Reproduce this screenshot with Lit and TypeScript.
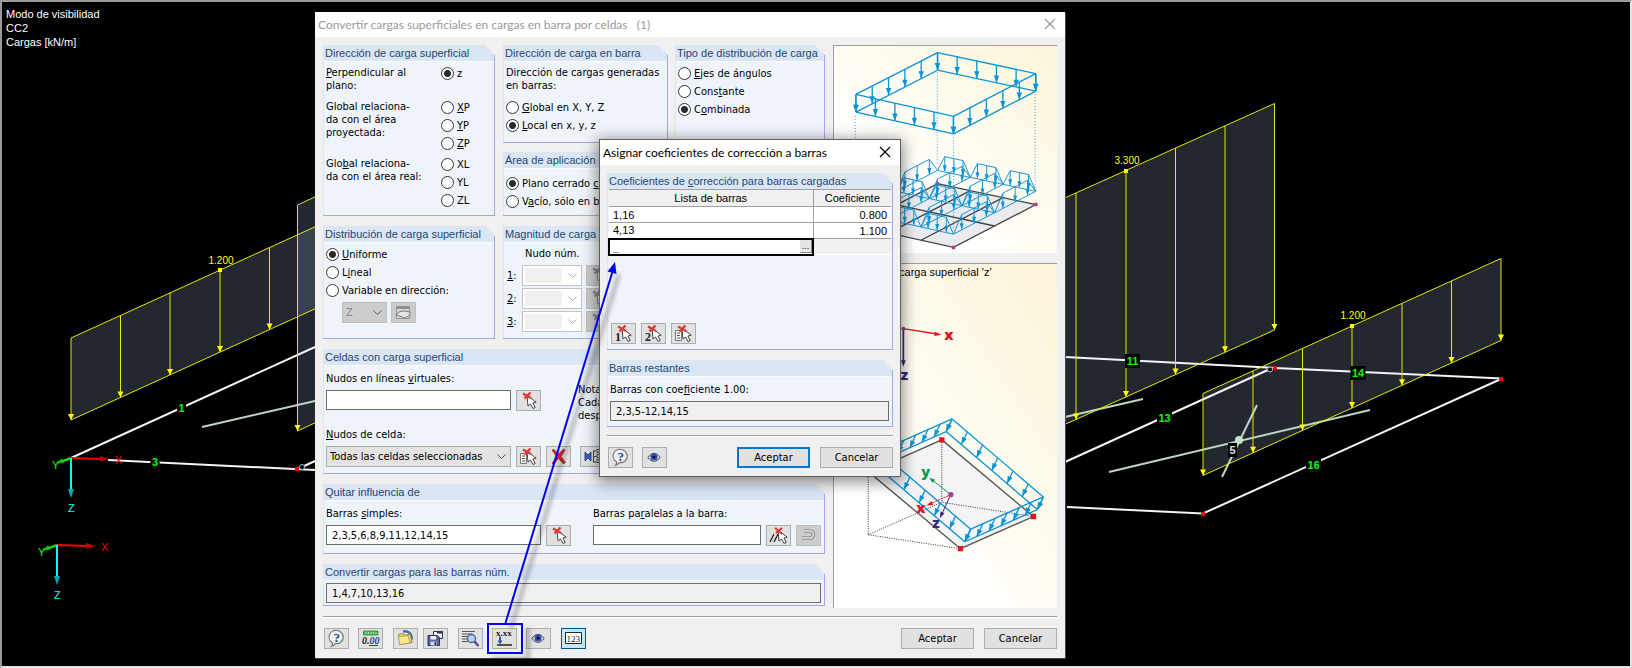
import { LitElement, html, css, svg } from "lit";
import { customElement, property } from "lit/decorators.js";

type Pt = [number, number];

/** Turns "&Lineal" into an underlined access key followed by the rest. */
const key = (s: string) => {
  const i = s.indexOf("&");
  return i < 0 ? s : html`${s.slice(0, i)}<u>${s[i + 1]}</u>${s.slice(i + 2)}`;
};

const lerp = (a: Pt, b: Pt, t: number): Pt => [a[0] + (b[0] - a[0]) * t, a[1] + (b[1] - a[1]) * t];
const pts = (...p: Pt[]) => p.map((q) => q.join(",")).join(" ");

/** Titled panel with a cut upper right corner. */
@customElement("load-group")
export class LoadGroup extends LitElement {
  @property() heading = "";
  static styles = css`
    :host {
      display: flex;
      flex-direction: column;
      position: relative;
      min-width: 0;
      box-sizing: border-box;
      border-bottom: 1px solid #a5a5ee;
    }
    :host::after {
      content: "";
      position: absolute;
      top: 10px;
      right: 0;
      bottom: 0;
      width: 1px;
      background: #a5a5ee;
    }
    h2 {
      margin: 0;
      height: 16px;
      padding-left: 2px;
      font: 11px/16px "Liberation Sans", Arial, sans-serif;
      white-space: nowrap;
      overflow: hidden;
      color: #1d4673;
      background: #dbe6f5;
      clip-path: polygon(0 0, calc(100% - 10px) 0, 100% 10px, 100% 100%, 0 100%);
    }
    .body {
      flex: 1;
      background: #eff4fa;
      border-left: 1px solid #dbe6f5;
      box-shadow: inset 0 1px #fafcfe;
      overflow: hidden;
    }
  `;
  render() {
    return html`<h2>${key(this.heading)}</h2>
      <div class="body"><slot></slot></div>`;
  }
}

const pointer = svg`<path d="M0 0 L1 11 L3.5 9 L6 13.5 L8.2 12.5 L6 8 L9.2 7.2 Z" fill="#fff" stroke="#444" stroke-width="1"/>`;
const redCross = svg`<path d="M-1 0.5 L7 5 M6.500 -0.5 L0.500 5.500" stroke="#dc3a34" stroke-width="2.400" fill="none"/>`;
const sheet = svg`<path d="M3.500 6.500h6v10h-6z" fill="#f6f6f6" stroke="#777"/><path d="M5 9h3M5 11.500h3M5 14h3" stroke="#555"/>`;
const pick = svg`<g transform="translate(10 4)">${pointer}</g><g transform="translate(7 2)">${redCross}</g>`;

const icons: Record<string, unknown> = {
  pick,
  pickList: svg`${sheet}${pick}`,
  pick1: svg`<text x="3" y="17" font-family="Liberation Serif" font-weight="bold" font-size="12" fill="#222">1</text>${pick}`,
  pick2: svg`<text x="3" y="17" font-family="Liberation Serif" font-weight="bold" font-size="12" fill="#222">2</text>${pick}`,
  pickParallel: svg`<path d="M3 16l4-8M7 16l4-8" stroke="#222" stroke-width="1.3"/><g transform="translate(11 4)">${pointer}</g><path d="M8 2l7 6M15 2l-6 5" stroke="#d8342c" stroke-width="1.800"/>`,
  remove: svg`<path d="M5 3l2-.5 4.500 4.500L16.500 2l1.500 1-4 6.500 4.500 6-2 1.500-5-5.500L7 17l-2-.5 4.500-7z" fill="#d02a24" stroke="#8c1210" stroke-width=".6"/>`,
  columns: svg`<path d="M4 5l3 3 3-3v9l-3-3-3 3z" fill="#3a5fbe" stroke="#1d347c" stroke-width=".8"/><path d="M12.500 3.500v12M12.500 4h3M12.500 9.500h3M12.500 15h3M16 2.500h6v3h-6zM16 7.500h6v3h-6zM16 12.500h6v3h-6z" fill="#eee" stroke="#444"/>`,
  help: svg`<path d="M11.500 1.500a6.600 6.600 0 1 1-1 13.100 10 10 0 0 1-4 2.700c1-1.200 1.300-2.200 1.100-3.400a6.600 6.600 0 0 1 3.900-12.400z" fill="#eef0f6" stroke="#777" stroke-width="1.200"/><text x="8.500" y="13" font-family="Liberation Serif" font-weight="bold" font-size="13" fill="#26468f">?</text>`,
  ruler: svg`<path d="M4.500 2h14.500v4H4.500z" fill="#4dbb52" stroke="#2a8a38" stroke-width=".8"/><path d="M7 3v2M9.500 3v2M12 3v2M14.500 3v2M17 3v2" stroke="#b6ecb4" stroke-width=".8"/><text x="3" y="15" font-family="Liberation Serif" font-style="italic" font-weight="bold" font-size="10" fill="#222">0.<tspan fill="#2b3f94">00</tspan></text><path d="M10 16.500h9" stroke="#2b3f94"/>`,
  open: svg`<path d="M9 2.500c5-1 8.500 1.500 9 8" fill="none" stroke="#456aa8" stroke-width="2.400"/><path d="M4.500 5.500l4-1 2 1.500 6-.5 1.500 8-12 2z" fill="#eed070" stroke="#96803a" stroke-width=".9"/><path d="M4.500 8l9.500-1.500 2 7.500-10.500 1.500z" fill="#fae794" stroke="#96803a" stroke-width=".6"/>`,
  save: svg`<path d="M9.500 2.500h9v7h-9z" fill="#f4f4f8" stroke="#334"/><path d="M13 2.500h5.500v2H13z" fill="#334"/><path d="M4 6.500h9.500l2 2v8H4z" fill="#55659f" stroke="#26305f"/><path d="M6.500 7h5.500v3.500H6.500z" fill="#f5f5fa"/><path d="M6.500 12.500h6v4h-6z" fill="#d5d9ea"/><path d="M10.500 13h1.500v3h-1.500z" fill="#26305f"/>`,
  preview: svg`<path d="M3 2.500h13M3 5h10M3 7.500h7M3 10h6M3 12.500h6" stroke="#555"/><circle cx="12.500" cy="9.500" r="4" fill="#bcd2f3" stroke="#4a66a4" stroke-width="1.400"/><path d="M15.500 12.500l4 4.500" stroke="#3d4fa0" stroke-width="2.400"/>`,
  factor: svg`<text x="3" y="6.500" font-family="Liberation Serif" font-weight="bold" font-size="9" fill="#222">x.xx</text><path d="M7 7.500v5" stroke="#2c58b0" stroke-width="2"/><path d="M4.500 11.500h5L7 15.500z" fill="#2c58b0"/><path d="M4 16h15" stroke="#222" stroke-width="1.500"/>`,
  eye: svg`<path d="M5 9.500c3-5.500 9-5.500 12 0-3 5-9 5-12 0z" fill="#dfe3f2" stroke="#444"/><circle cx="11" cy="9" r="3.600" fill="#3450b4"/><circle cx="11" cy="9" r="1.500" fill="#0a0f35"/>`,
  numbers: svg`<path d="M3.500 3.500h16v11h-16z" fill="#fff" stroke="#222"/><text x="4.500" y="12.500" font-family="Liberation Serif" font-size="9" fill="#111">123</text>`,
  loop: svg`<path d="M5 12h8a3.500 3.500 0 0 0 0-7H7" fill="none" stroke="#666" stroke-width="3.500"/><path d="M5 12h8a3.500 3.500 0 0 0 0-7H7" fill="none" stroke="#eee" stroke-width="1.400"/>`,
  hand: svg`<path d="M4.500 3.500h13v12h-13z" fill="#ddd" stroke="#777"/><path d="M4.500 3.500h13v2.500h-13z" fill="#666"/><path d="M4 11.500l4-3 4-.5 6 1v3l-5 3-3-1z" fill="#f4f4ee" stroke="#444"/>`,
};

/** Vertical load strip: top edge from a to b, arrows hanging down by h. */
interface Strip {
  a: Pt;
  b: Pt;
  h: number;
  xs: number[];
}
const strips: Strip[] = [
  { a: [71, 338], b: [319, 225], h: 82, xs: [71, 120.5, 170, 220, 269.5] },
  { a: [297.5, 205], b: [319, 195], h: 226, xs: [297.5] },
  { a: [1027, 215], b: [1274.5, 103.5], h: 226.5, xs: [1076, 1126, 1175.5, 1225, 1274.5] },
  { a: [1203, 393.5], b: [1501, 258.5], h: 82, xs: [1203, 1253, 1302.5, 1352, 1402, 1451.5, 1501] },
];
const stripFill = ({ a, b, h }: Strip) =>
  svg`<polygon points=${pts(a, b, [b[0], b[1] + h], [a[0], a[1] + h])} class="fill"/>`;
const stripLoad = ({ a, b, h, xs }: Strip) => {
  const at = (x: number) => a[1] + ((b[1] - a[1]) * (x - a[0])) / (b[0] - a[0]);
  return svg`
    <path class="load" d="M${a.join(" ")}L${b.join(" ")}M${a[0]} ${a[1] + h}L${b[0]} ${b[1] + h}"/>
    ${xs.map((x) => svg`<path class="load" d="M${x} ${at(x)}V${at(x) + h}"/><path class="head" d="M${x - 3} ${at(x) + h - 6}h6l-3 6z"/>`)}`;
};

const triad = (x: number, y: number) => svg`
  <path d="M${x} ${y}l-8 3" stroke="#0f0" stroke-width="2"/><path d="M${x - 14} ${y + 5}l5-4 2 3z" fill="#0c0" stroke="#0c0"/>
  <path d="M${x} ${y}l30 1" stroke="#f00" stroke-width="2"/><path d="M${x + 29} ${y - 2}l10 3-10 2.500z" fill="#c00000"/>
  <path d="M${x} ${y}v32" stroke="#0ff" stroke-width="2"/><path d="M${x - 3} ${y + 31}h6l-3 9z" fill="#00aab4"/>
  <text x=${x - 19} y=${y + 11} fill="#0f0">Y</text>
  <text x=${x + 44} y=${y + 6} fill="#f00">X</text>
  <text x=${x - 3} y=${y + 54} fill="#0ff">Z</text>`;

const tag = (x: number, y: number, t: string, color = "#0f0") => {
  const w = t.length * 6 + 3;
  return svg`<rect x=${x - w / 2} y=${y - 7} width=${w} height="14" fill="#000"/>
    <text class="num" x=${x} y=${y + 4} fill=${color}>${t}</text>`;
};

const scene = svg`
  ${strips.map(stripFill)}
  <path class="bar" d="M71 458L315 347M108 460L315 470M302 467L315 461"/>
  <path class="bar" d="M1065 357L1275 368L1502 378.500M1065 462L1270 369M1067 507L1203 513.500L1501 379"/>
  <path class="virt" d="M202 427L315 401M1065 417L1143 399M1109 472L1370 410M1222 477L1257 405"/>
  <circle cx="1239" cy="440" r="4" fill="#c4dfcb"/>
  ${strips.map(stripLoad)}
  <path d="M218 268h4v4h-4zM1124 169h4v4h-4zM1350 324h4v4h-4z" fill="#ff0"/>
  <text class="val" x="221" y="264">1.200</text>
  <text class="val" x="1127" y="164">3.300</text>
  <text class="val" x="1353" y="319">1.200</text>
  ${tag(181.5, 408, "1")}${tag(155, 462, "3")}${tag(1132.5, 361, "11")}${tag(1358, 373, "14")}
  ${tag(1164.5, 418, "13")}${tag(1313.5, 465, "16")}${tag(1232.5, 450, "5", "#d6e8da")}
  <path d="M295 467h4v4h-4zM1273 366h4v4h-4zM1499 377h4v4h-4zM1201 512h4v4h-4z" fill="#f00"/>
  <circle cx="302" cy="467" r="2.500" fill="#000" stroke="#a8b8d8"/><circle cx="1270" cy="369.500" r="2.500" fill="#000" stroke="#a8b8d8"/>
  ${triad(71, 458)}${triad(57, 545)}`;

/** Row of parallel arrows with a common displacement d along the edge a-b. */
const fringe = (a: Pt, b: Pt, d: Pt, n: number) => {
  const ang = (Math.atan2(d[1], d[0]) * 180) / Math.PI;
  return svg`<path class="blue" d="M${a.join(" ")}L${b.join(" ")}M${a[0] + d[0]} ${a[1] + d[1]}L${b[0] + d[0]} ${b[1] + d[1]}"/>
    ${Array.from({ length: n + 1 }, (_, i) => {
      const p = lerp(a, b, i / n);
      return svg`<path class="blue" d="M${p.join(" ")}l${d[0]} ${d[1]}"/>
        <path d="M0 0l-22-8v16z" fill="#0b93d6" transform="translate(${p[0] + d[0]} ${p[1] + d[1]}) rotate(${ang})"/>`;
    })}`;
};

/** Trapezoidal load over the cell edge a-b. */
const hill = (a: Pt, b: Pt, inset: number) => {
  const p = lerp(a, b, inset);
  const q = lerp(a, b, 1 - inset);
  return svg`<path class="thin" d="M${a.join(" ")}L${p[0]} ${p[1] - 46}L${q[0]} ${q[1] - 46}L${b.join(" ")}z"/>
    ${[0, 0.5, 1].map((t) => {
      const [x, y] = lerp(p, q, t);
      return svg`<path class="thin" d="M${x} ${y - 46}v44"/><path d="M${x - 6} ${y - 20}h12l-6 20z" fill="#0b93d6"/>`;
    })}`;
};

const cellsPicture = () => {
  const A: Pt = [336, 65], B: Pt = [632, 128], C: Pt = [384, 257], D: Pt = [90, 191];
  const a: Pt = [336, 460], b: Pt = [632, 523], c: Pt = [384, 652], d: Pt = [90, 587];
  const up = (p: Pt): Pt => [p[0], p[1] - 40];
  const at = (u: number, v: number): Pt => lerp(lerp(a, b, u), lerp(d, c, u), v);
  return svg`
    <polygon points=${pts(a, b, c, d)} fill="#e9ebee" stroke="#444" stroke-width="4"/>
    <path stroke="#444" stroke-width="4" d="M${at(0, 0.5).join(" ")}L${at(1, 0.5).join(" ")}M${at(1 / 3, 0).join(" ")}L${at(1 / 3, 1).join(" ")}M${at(2 / 3, 0).join(" ")}L${at(2 / 3, 1).join(" ")}"/>
    <circle cx="336" cy="460" r="6" fill="#b5407f"/><circle cx="632" cy="523" r="6" fill="#b5407f"/><circle cx="384" cy="652" r="6" fill="#b5407f"/>
    <path d="M88 256V560M335 125V400M384 320V600M630 190V480" stroke="#3aa0d4" stroke-width="3" stroke-dasharray="3 6"/>
    ${[0, 0.5, 1].map((v) => [0, 1, 2].map((i) => hill(up(at(i / 3, v)), up(at((i + 1) / 3, v)), 0.22)))}
    ${[0, 1 / 3, 2 / 3, 1].map((u) => [0, 1].map((i) => hill(up(at(u, i / 2)), up(at(u, (i + 1) / 2)), 0.2)))}
    ${fringe(A, B, [0, 53], 5)}${fringe(A, D, [0, 53], 5)}${fringe(D, C, [0, 53], 5)}${fringe(C, B, [0, 53], 5)}`;
};

const planePicture = () => {
  const P: Pt[] = [[380, 492], [655, 727], [436, 824], [161, 589]];
  const v: Pt = [-18, 38];
  return svg`
    <text x="28" y="62" font-family="Liberation Sans" font-size="33" fill="#000">Dirección de carga superficial 'z'</text>
    <path d="M233 220L335 236" stroke="#e3131f" stroke-width="4"/><path d="M348 238l-22 4 2-13z" fill="#e3131f"/>
    <path d="M233 220V318" stroke="#35287c" stroke-width="5"/><path d="M226 315h14l-7 20z" fill="#35287c"/>
    <circle cx="233" cy="220" r="6" fill="#9a3f8a"/>
    <text class="ax" x="370" y="254" fill="#e3131f">x</text><text class="ax" x="236" y="374" fill="#35287c">z</text>
    <polygon points="349,555 625,786 405,883 129,652" fill="#f4f4f7" stroke="#555" stroke-width="4"/>
    <path d="M127 660V841L405 883M127 841L349 743L625 786M349 555V743" fill="none" stroke="#333" stroke-width="3" stroke-dasharray="3 4"/>
    ${fringe(P[0], P[1], v, 6)}${fringe(P[1], P[2], v, 6)}${fringe(P[2], P[3], v, 6)}${fringe(P[3], P[0], v, 6)}
    <path d="M341 547h16v16h-16zM617 778h16v16h-16zM397 875h16v16h-16z" fill="#e3131f"/>
    <path d="M376 720L320 676" stroke="#0d9c4c" stroke-width="3"/><path d="M311 669l18 6-8 10z" fill="#0d9c4c"/>
    <path d="M376 720L315 747" stroke="#e3131f" stroke-width="3" stroke-dasharray="6 3"/><path d="M303 753l15-14 5 12z" fill="#e3131f"/>
    <path d="M376 720L349 778" stroke="#35287c" stroke-width="3"/><path d="M343 791l2-20 12 5z" fill="#35287c"/>
    <circle cx="376" cy="720" r="8" fill="#a8438b"/>
    <text class="ax" x="300" y="667" fill="#0d9c4c">y</text><text class="ax" x="286" y="774" fill="#e3131f">x</text><text class="ax" x="331" y="822" fill="#35287c">z</text>`;
};

@customElement("app-root")
export class AppRoot extends LitElement {
  static styles = css`
    :host {
      display: block;
      position: relative;
      min-height: 100vh;
      overflow: hidden;
      background: #000;
      color: #000;
      font: 11px/13px "DejaVu Sans Condensed", Tahoma, sans-serif;
    }
    :host::after {
      content: "";
      position: absolute;
      inset: 0;
      border: 2px solid #9a9a9a;
      border-right-color: #e4e4e4;
      border-bottom-color: #e4e4e4;
      pointer-events: none;
    }
    * { box-sizing: border-box; }
    u { text-underline-offset: 1px; }
    .scene, .callout {
      position: absolute;
      left: 0;
      top: 0;
      width: 1632px;
      height: 668px;
      pointer-events: none;
    }
    .scene text { font: 11px "Liberation Sans", Arial, sans-serif; }
    .scene .val { font-size: 10px; fill: #ff0; text-anchor: middle; }
    .scene .num { font-weight: bold; text-anchor: middle; }
    .fill { fill: #6e8096; fill-opacity: 0.31; }
    .load { stroke: #e6e600; stroke-width: 1; fill: none; }
    .head { fill: #ff0; }
    .bar { stroke: #f4f4fa; stroke-width: 2; fill: none; }
    .virt { stroke: #bcd6c4; stroke-width: 2; fill: none; }
    .mode {
      position: relative;
      margin: 0;
      padding: 7px 6px;
      font: 11px/14px "Liberation Sans", Arial, sans-serif;
      color: #fff;
    }
    .win { position: absolute; background: #f0f0f0; }
    .main { left: 315px; top: 12px; width: 750px; box-shadow: 1px 1px #444; }
    .sub {
      left: 599px;
      top: 139px;
      width: 302px;
      border: 1px solid #5f5f5f;
      box-shadow: 0 3px 14px 2px rgba(0, 0, 0, 0.45);
    }
    .title {
      display: flex;
      align-items: center;
      justify-content: space-between;
      height: 25px;
      padding: 0 9px 1px 3px;
      background: #fff;
      font: 12px Lato, "Segoe UI", sans-serif;
    }
    .title h1 { margin: 0; font: inherit; white-space: pre; }
    .main .title { color: #999; }
    .close { border: 0; padding: 0; background: none; color: inherit; display: flex; }
    .close path { stroke: currentColor; stroke-width: 1.2; }
    .content { display: flex; gap: 8px; padding: 8px 8px 0; }
    .left { flex: 1; display: flex; flex-direction: column; gap: 10px; min-width: 0; }
    .pair { display: grid; grid-template-columns: 172px 1fr; gap: 8px; }
    .side { display: flex; flex-direction: column; gap: 9px; min-width: 0; }
    .side load-group { flex: 1; }
    .top { display: grid; grid-template-columns: 165px 1fr; gap: 7px; height: 98px; }
    .pics { display: flex; flex-direction: column; gap: 10px; width: 224px; }
    .pics svg {
      display: block;
      border: solid #a0a0a0;
      border-width: 1px 0 0 1px;
      background: linear-gradient(to top right, #fff 25%, #fdf6da);
    }
    .pics .plane { background: linear-gradient(to top right, #fff 25%, #fdf5d8); }
    .blue { stroke: #0b93d6; stroke-width: 4; fill: none; }
    .thin { stroke: #1796d6; stroke-width: 3; fill: none; }
    .ax { font: 800 44px "Open Sans", sans-serif; text-anchor: middle; }
    .pad { padding: 3px 2px 0; }
    .pad6 { padding: 6px 2px 0; }
    .dir { display: grid; grid-template-columns: 115px 1fr; }
    .dir p, .lead { margin: 0; padding-top: 2px; white-space: nowrap; }
    .dir.first, .lead { height: 34px; }
    .dir.mid { height: 57px; }
    .dir.last { height: 60px; }
    .radio { display: flex; align-items: center; gap: 3px; height: 18px; white-space: nowrap; }
    input[type="radio"] {
      appearance: none;
      flex: none;
      width: 13px;
      height: 13px;
      margin: 0;
      border: 1px solid #333;
      border-radius: 50%;
      background: #fff;
    }
    input[type="radio"]:checked { background: radial-gradient(circle, #2a2a2a 3px, #fff 4px); }
    input:not([type="radio"]) {
      height: 20px;
      min-width: 0;
      flex: 1;
      margin: 0;
      padding: 0 5px;
      border: 1px solid #6e6e6e;
      background: #fff;
      color: #000;
      font: inherit;
    }
    input:read-only:not([type="radio"]) { background: #f0f0f0; }
    select {
      appearance: none;
      height: 21px;
      margin: 0;
      padding: 0 3px;
      border: 1px solid #adadad;
      border-radius: 0;
      color: #000;
      opacity: 1;
      font: inherit;
      background: #e3e3e3
        url("data:image/svg+xml,%3Csvg xmlns='http://www.w3.org/2000/svg' width='9' height='6'%3E%3Cpath d='M.5 .5l4 4 4-4' fill='none' stroke='%23555'/%3E%3C/svg%3E")
        no-repeat right 4px center;
    }
    select:disabled { color: #888; background-color: #ccc; border-color: #bfbfbf; }
    .axis { width: 45px; }
    .node:disabled {
      width: 60px;
      border-color: #c4c4c4;
      background:
        url("data:image/svg+xml,%3Csvg xmlns='http://www.w3.org/2000/svg' width='9' height='6'%3E%3Cpath d='M.5 .5l4 4 4-4' fill='none' stroke='%23aaa'/%3E%3C/svg%3E")
          no-repeat right 4px center,
        linear-gradient(#f0f0f0, #f0f0f0) 2px 2px / 37px 15px no-repeat,
        #fff;
    }
    .ib {
      flex: none;
      display: flex;
      width: 25px;
      height: 21px;
      padding: 0;
      border: 1px solid #adadad;
      background: #e1e1e1;
    }
    .ib:disabled { background: #ccc; border-color: #bfbfbf; }
    .ib:disabled svg { filter: grayscale(1); opacity: 0.6; }
    .ib.on { background: #cce4f7; border-color: #005499; }
    .row { display: flex; gap: 5px; }
    .indent { padding: 3px 0 0 16px; gap: 4px; }
    .magnitude { height: 113px; }
    .nodes { display: grid; grid-template-columns: 16px 60px 25px; gap: 2px 0; padding: 1px 2px 0; align-items: center; }
    .nodes .ib { margin-left: 4px; }
    .nodes label { padding-left: 1px; }
    .caption { height: 19px; padding: 2px 0 0 19px; white-space: nowrap; }
    .field { display: flex; flex-direction: column; gap: 5px; }
    .field > label { white-space: nowrap; }
    .cells { padding: 7px 4px 6px 2px; display: flex; flex-direction: column; gap: 6px; }
    .noted { display: flex; gap: 37px; }
    .noted .field { width: 215px; }
    .note { margin: 0; padding-top: 11px; }
    .wide { width: 185px; }
    .far { margin-left: 4px; }
    .influence { display: grid; grid-template-columns: 245px 1fr; gap: 22px; padding: 7px 4px 7px 2px; }
    .only { display: flex; padding: 3px 4px 2px 2px; }
    .bar-row {
      display: flex;
      align-items: center;
      gap: 10px;
      margin: 8px 8px 0;
      padding: 11px 0 9px 1px;
      border-top: 1px solid #a0a0a0;
      box-shadow: inset 0 1px #fff;
    }
    .tools { display: flex; gap: 9px; }
    .tools.tight { gap: 5px; }
    .text-btn {
      width: 73px;
      height: 21px;
      padding: 0;
      border: 1px solid #adadad;
      background: #e1e1e1;
      color: #000;
      font: inherit;
    }
    .default { border: 2px solid #0078d7; }
    .push { margin-left: auto; }
    .sub-content { display: flex; flex-direction: column; gap: 10px; padding: 8px 7px 0; }
    .coef { height: 177px; }
    table { width: 283px; table-layout: fixed; border-collapse: collapse; font: 11px/14px "Liberation Sans", Arial, sans-serif; }
    th, td { height: 16px; padding: 0 4px; border: solid #a0a0a0; border-width: 1px 1px 1px 0; font-weight: normal; background: #fff; text-align: left; }
    th { height: 17px; background: #f0f0f0; text-align: center; }
    th:last-child, td:last-child { border-right: 0; text-align: right; }
    th:last-child { text-align: center; }
    th:first-child { width: 204px; }
    td.void { background: #f0f0f0; border-bottom-color: #fff; }
    td.active { padding: 0; border: 2px solid #000; }
    .edit { display: flex; height: 13px; }
    .edit input:not([type="radio"]) { height: 13px; border: 0; padding: 0 3px; font: bold 11px/12px "Liberation Sans", sans-serif; }
    .edit button { width: 12px; padding: 0; border: 1px solid #888; border-width: 0 1px 1px 0; background: #e6e6e6; font: 9px/8px "Liberation Sans", sans-serif; }
    .picks { display: flex; gap: 5px; padding: 67px 0 0 3px; }
    .rest { padding: 7px 4px 5px 2px; }
    .rest input:not([type="radio"]) { flex: none; }
    .sub .bar-row { margin: 8px 7px 0; padding-bottom: 8px; }
  `;

  private radio(group: string, label: string, checked = false) {
    return html`<label class="radio"><input type="radio" name=${group} ?checked=${checked} /><span>${key(label)}</span></label>`;
  }

  private icon(name: string, label: string, cls = "", disabled = false) {
    return html`<button type="button" class="ib ${cls}" aria-label=${label} ?disabled=${disabled}>
      <svg width="23" height="19" viewBox="0 0 23 19" fill="none" aria-hidden="true">${icons[name]}</svg>
    </button>`;
  }

  private title(text: string) {
    return html`<header class="title">
      <h1>${text}</h1>
      <button type="button" class="close" aria-label="Cerrar"><svg width="12" height="12" viewBox="0 0 12 12"><path d="M1 1l10 10M11 1L1 11" /></svg></button>
    </header>`;
  }

  private mainDialog() {
    return html`<section class="win main">
      ${this.title("Convertir cargas superficiales en cargas en barra por celdas   (1)")}
      <div class="content">
        <div class="left">
          <div class="pair">
            <load-group heading="Dirección de carga superficial">
              <div class="pad">
                <div class="dir first"><p>${key("&Perpendicular al")}<br />plano:</p><div>${this.radio("dir", "z", true)}</div></div>
                <div class="dir mid">
                  <p>Global relaciona-<br />da con el área<br />proyectada:</p>
                  <div>${this.radio("dir", "&XP")}${this.radio("dir", "&YP")}${this.radio("dir", "&ZP")}</div>
                </div>
                <div class="dir last">
                  <p>${key("Glo&bal relaciona-")}<br />da con el área real:</p>
                  <div>${this.radio("dir", "XL")}${this.radio("dir", "YL")}${this.radio("dir", "ZL")}</div>
                </div>
              </div>
            </load-group>
            <div class="side">
              <div class="top">
                <load-group heading="Dirección de carga en barra">
                  <div class="pad">
                    <p class="lead">Dirección de cargas generadas<br />en barras:</p>
                    ${this.radio("bar", "&Global en X, Y, Z")}${this.radio("bar", "&Local en x, y, z", true)}
                  </div>
                </load-group>
                <load-group heading="Tipo de distribución de carga">
                  <div class="pad">
                    ${this.radio("type", "&Ejes de ángulos")}${this.radio("type", "Cons&tante")}${this.radio("type", "C&ombinada", true)}
                  </div>
                </load-group>
              </div>
              <load-group heading="Área de aplicación de carga">
                <div class="pad6">${this.radio("area", "Plano cerrado &completo", true)}${this.radio("area", "V&acío, sólo en barras")}</div>
              </load-group>
            </div>
          </div>
          <div class="pair">
            <load-group heading="Distribución de carga superficial">
              <div class="pad">
                ${this.radio("dist", "&Uniforme", true)}${this.radio("dist", "L&ineal")}${this.radio("dist", "Variable en dirección:")}
                <div class="row indent">
                  <select class="axis" aria-label="Dirección" disabled><option>Z</option></select>
                  ${this.icon("hand", "Definir dirección", "", true)}
                </div>
              </div>
            </load-group>
            <load-group class="magnitude" heading="Magnitud de carga superficial">
              <div class="pad"><div class="caption">Nudo núm.</div></div>
              <div class="nodes">
                ${[1, 2, 3].map((n) => html`<label for="n${n}"><u>${n}</u>:</label><select id="n${n}" class="node" disabled></select>${this.icon("pick", "Seleccionar nudo", "", true)}`)}
              </div>
            </load-group>
          </div>
          <load-group heading="Celdas con carga superficial">
            <div class="cells">
              <div class="noted">
                <div class="field">
                  <label for="virt">${key("Nudos en líneas &virtuales:")}</label>
                  <div class="row"><input id="virt" class="wide" />${this.icon("pick", "Seleccionar nudos")}</div>
                </div>
                <p class="note">Nota:<br />Cada celda<br />después</p>
              </div>
              <div class="field">
                <label for="cell">${key("&Nudos de celda:")}</label>
                <div class="row">
                  <select id="cell" class="wide"><option>Todas las celdas seleccionadas</option></select>
                  ${this.icon("pickList", "Seleccionar celdas")}${this.icon("remove", "Eliminar")}${this.icon("columns", "Lista", "far")}
                </div>
              </div>
            </div>
          </load-group>
          <load-group heading="Quitar influencia de">
            <div class="influence">
              <div class="field">
                <label for="simple">${key("Barras &simples:")}</label>
                <div class="row"><input id="simple" .value=${"2,3,5,6,8,9,11,12,14,15"} />${this.icon("pick", "Seleccionar barras")}</div>
              </div>
              <div class="field">
                <label for="par">${key("Barras pa&ralelas a la barra:")}</label>
                <div class="row"><input id="par" />${this.icon("pickParallel", "Seleccionar paralelas")}${this.icon("loop", "Deshacer", "", true)}</div>
              </div>
            </div>
          </load-group>
          <load-group heading="Convertir cargas para las barras núm.">
            <div class="only"><input aria-label="Barras" readonly .value=${"1,4,7,10,13,16"} /></div>
          </load-group>
        </div>
        <div class="pics">
          <svg viewBox="24 45 672 624" role="img" aria-label="Conversión por celdas">${cellsPicture()}</svg>
          <svg class="plane" viewBox="24 25 672 1035" role="img" aria-label="Carga superficial z">${planePicture()}</svg>
        </div>
      </div>
      <footer class="bar-row">
        <div class="tools">${this.icon("help", "Ayuda")}${this.icon("ruler", "Decimales")}</div>
        <div class="tools tight">${this.icon("open", "Abrir")}${this.icon("save", "Guardar")}</div>
        <div class="tools">${this.icon("preview", "Detalles")}${this.icon("factor", "Coeficientes")}${this.icon("eye", "Vista")}</div>
        ${this.icon("numbers", "Numeración", "on")}
        <button type="button" class="text-btn push">Aceptar</button><button type="button" class="text-btn">Cancelar</button>
      </footer>
    </section>`;
  }

  private subDialog() {
    const rows = [["1,16", "0.800"], ["4,13", "1.100"]];
    return html`<section class="win sub">
      ${this.title("Asignar coeficientes de corrección a barras")}
      <div class="sub-content">
        <load-group class="coef" heading="Coeficientes de &corrección para barras cargadas">
          <table>
            <thead><tr><th>Lista de barras</th><th>Coeficiente</th></tr></thead>
            <tbody>
              ${rows.map(([l, c]) => html`<tr><td>${l}</td><td>${c}</td></tr>`)}
              <tr>
                <td class="active"><div class="edit"><input aria-label="Lista de barras" .value=${"_"} /><button type="button" aria-label="Seleccionar">...</button></div></td>
                <td class="void"></td>
              </tr>
            </tbody>
          </table>
          <div class="picks">${this.icon("pick1", "Seleccionar una")}${this.icon("pick2", "Seleccionar dos")}${this.icon("pickList", "Seleccionar lista")}</div>
        </load-group>
        <load-group heading="Barras restantes">
          <div class="field rest">
            <label for="rest">${key("Barras con coe&ficiente 1.00:")}</label>
            <input id="rest" readonly .value=${"2,3,5-12,14,15"} />
          </div>
        </load-group>
      </div>
      <footer class="bar-row">
        <div class="tools">${this.icon("help", "Ayuda")}${this.icon("eye", "Vista")}</div>
        <button type="button" class="text-btn default push">Aceptar</button><button type="button" class="text-btn">Cancelar</button>
      </footer>
    </section>`;
  }

  render() {
    return html`
      <svg class="scene" viewBox="0 0 1632 668" fill="none" aria-hidden="true">${scene}</svg>
      <p class="mode">Modo de visibilidad<br />CC2<br />Cargas [kN/m]</p>
      ${this.mainDialog()} ${this.subDialog()}
      <svg class="callout" viewBox="0 0 1632 668" fill="none" aria-hidden="true">
        <defs><filter id="soft"><feGaussianBlur stdDeviation="2" /></filter></defs>
        <g stroke="#000" stroke-opacity=".35" stroke-width="3" filter="url(#soft)">
          <path d="M511 628L619 274M493 659h35v-31" />
        </g>
        <path d="M505.500 623L613 270" stroke="#00f" stroke-width="2" />
        <path d="M615 262l1.500 12-9-2.500z" fill="#00f" />
        <rect x="488" y="624" width="34" height="29" stroke="#00f" stroke-width="2" />
      </svg>
    `;
  }
}
